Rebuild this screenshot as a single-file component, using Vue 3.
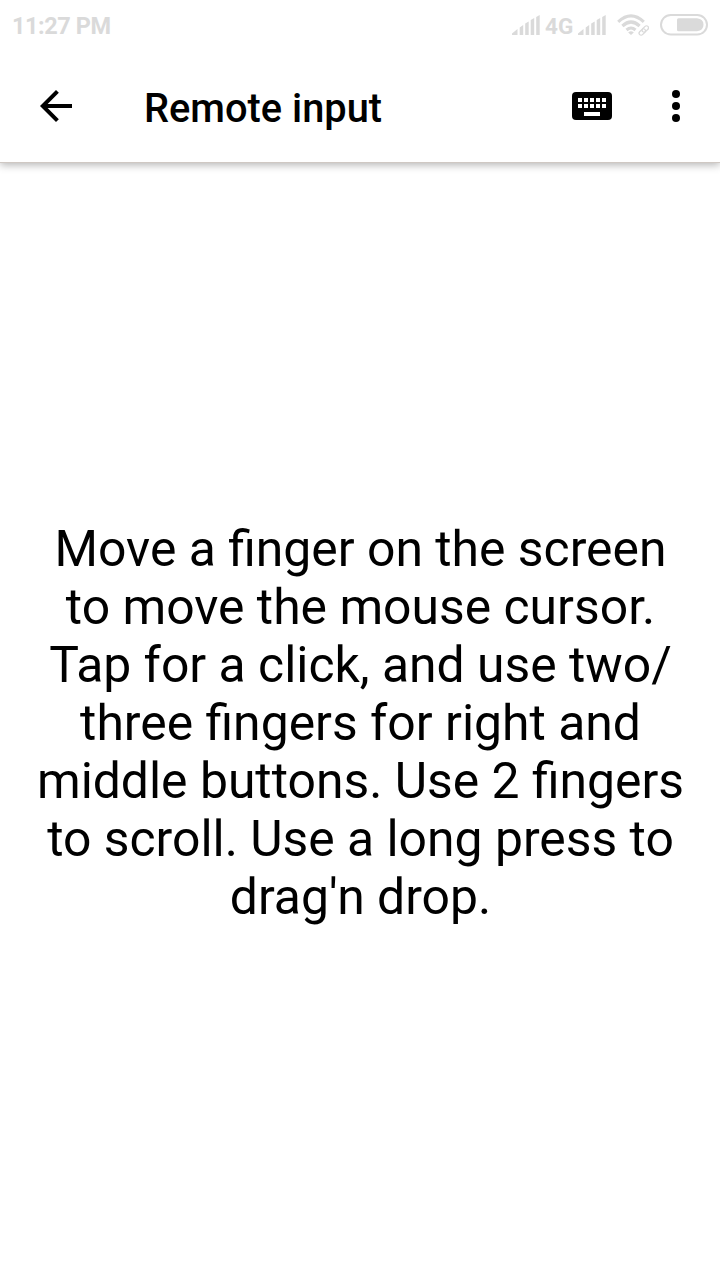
<script setup>
const keys = [0, 1, 2, 3, 4]
const signal = 'M0 20V18.5L5.5 14V20ZM7.7 20V12.5L11.2 10V20ZM13.2 20V8.5L16.7 6.5V20ZM18.7 20V5L22.2 3V20ZM24.2 20V2L27.7 0V20Z'
const lines = ['Move a finger on the screen', 'to move the mouse cursor.', 'Tap for a click, and use two/', 'three fingers for right and', 'middle buttons. Use 2 fingers', 'to scroll. Use a long press to', "drag'n drop."]
</script>

<template>
  <main class="screen">
    <header class="top">
      <div class="status">
        <span class="clock">11:27 PM</span>
        <svg class="signal" width="28" height="20" viewBox="0 0 28 20"><path :d="signal" /></svg>
        <span class="net">4G</span>
        <svg class="signal" width="28" height="20" viewBox="0 0 28 20"><path :d="signal" /></svg>
        <svg class="wifi" width="32" height="22" viewBox="0 0 32 22">
          <g fill="none" stroke="#dadada" stroke-width="3.1"><path d="M1.2 7.8Q14-4.2 26.8 7.8M5.4 12Q14 4 22.6 12M9.5 16Q14 12 18.5 16" /></g>
          <path d="M11.2 18.4Q14 16.2 16.8 18.4L14 21Z" />
          <g fill="none" stroke="#dadada" stroke-width="1.3"><rect x="-3.7" y="-2" width="7.4" height="4" rx="2" transform="translate(25.3 18) rotate(-45)" /><rect x="-3.7" y="-2" width="7.4" height="4" rx="2" transform="translate(28.3 15) rotate(-45)" /></g>
        </svg>
        <svg class="battery" width="48" height="22" viewBox="0 0 48 22"><rect x="1" y="1" width="46" height="19.5" rx="9.75" fill="none" stroke="#dadada" stroke-width="2" /><path d="M18.5 4.3H37Q43.5 5 43.5 10.7T37 17.2H18.5Q17 17.2 17 15.7V5.8Q17 4.3 18.5 4.3Z" /></svg>
      </div>
      <nav class="bar">
        <svg class="back" width="48" height="48" viewBox="0 0 24 24"><path d="M20 11H7.83l5.59-5.59L12 4l-8 8 8 8 1.41-1.41L7.83 13H20v-2z" /></svg>
        <h1>Remote input</h1>
        <svg class="keyboard" width="48" height="48" viewBox="0 0 24 24"><rect x="2" y="5" width="20" height="14" rx="2" /><g fill="#fff"><rect v-for="i in keys" :key="i" :x="5 + i * 3" y="8" width="2" height="2" /><rect v-for="i in keys" :key="'b' + i" :x="5 + i * 3" y="11" width="2" height="2" /><rect x="8" y="15" width="8" height="2" /></g></svg>
        <svg class="more" width="48" height="48" viewBox="0 0 24 24"><circle cx="12" cy="6" r="2" /><circle cx="12" cy="12" r="2" /><circle cx="12" cy="18" r="2" /></svg>
      </nav>
    </header>
    <section class="content"><p><span v-for="l in lines" :key="l">{{ l }}</span></p></section>
  </main>
</template>

<style>
body { margin: 0; background: #fff; }
</style>
<style scoped>
.screen { width: 720px; height: 1280px; display: flex; flex-direction: column; background: #fff; color: #000; font-family: Roboto, sans-serif; overflow: hidden; }
.top { height: 162px; box-shadow: 0 1px 0 #cfc8c3, 0 3px 8px #b4b4b4; flex: none; }
.status { height: 50px; display: flex; align-items: center; padding: 0 12px; box-sizing: border-box; color: #dadada; fill: #dadada; font: bold 23.5px Roboto, sans-serif; }
.status svg { flex: none; }
.clock { margin-right: auto; padding-top: 2px; letter-spacing: -0.45px; }
.net { width: 28px; margin: 0 5px; padding-top: 2px; font-size: 22.5px; }
.wifi { margin-left: 11px; }
.battery { margin-left: 11px; }
.bar { height: 112px; display: flex; align-items: center; padding: 0 20px 0 32px; box-sizing: border-box; }
h1 { margin: 0 auto 0 64px; padding-top: 4px; font-size: 39.8px; font-weight: 500; }
.more { margin-left: 36px; }
.content { flex: 1; display: flex; align-items: center; justify-content: center; padding: 4px 0 0 1px; }
p { margin: 0; font-size: 49.85px; line-height: 58px; text-align: center; }
span { white-space: nowrap; }
p span { display: block; }
</style>
